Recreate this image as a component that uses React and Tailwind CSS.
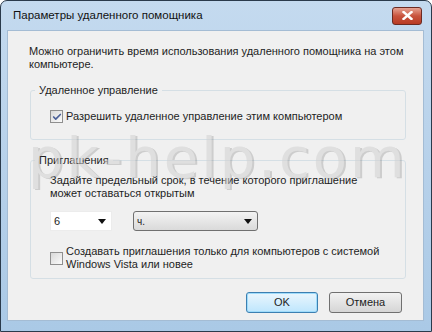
import { Check } from 'lucide-react';

const FONT = { fontFamily: '"Liberation Sans", Arial, sans-serif' };

function Checkbox({ checked }) {
    return (
        <div className="w-[13px] h-[13px] border border-[#8f8f8f] bg-gradient-to-br from-[#d8d8d8] to-[#fbfbfb] flex items-center justify-center shrink-0">
            {checked && <Check className="w-[10px] h-[10px] text-[#4a5f97]" strokeWidth={4} />}
        </div>
    );
}

function Arrow() {
    return (
        <svg width="8" height="5" viewBox="0 0 8 5">
            <path d="M0 0 H8 L4 5 Z" fill="#111" />
        </svg>
    );
}

export default function App() {
    return (
        <div
            className="w-[432px] h-[332px] rounded-t-[7px] border border-[#2a3a4b] bg-gradient-to-b from-[#c4daef] via-[#b7d1ea] to-[#aac9e6] flex flex-col text-[11px] text-[#1e1e1e] overflow-hidden"
            style={FONT}
        >
            {/* title bar */}
            <div className="h-[29px] flex items-center justify-between pl-[12px] pr-[9px]">
                <span className="text-[11.5px] text-[#111] mt-[1px]">Параметры удаленного помощника</span>
                <div className="w-[30px] h-[18px] rounded-[3px] border border-[#6b2a22] bg-gradient-to-b from-[#e5a293] via-[#c8533d] to-[#b83b24] flex items-center justify-center">
                    <svg width="11" height="9" viewBox="0 0 11 9">
                        <path d="M1.5 1 L9.5 8 M9.5 1 L1.5 8" stroke="#fff" strokeWidth="2.4" strokeLinecap="square" />
                    </svg>
                </div>
            </div>

            {/* client area */}
            <div className="relative flex-1 ml-[6px] mr-[7px] mb-[10px] bg-[#f0f0f0] border border-[#a4bcd4] pl-[21px] pt-[14px]">
                <p className="leading-[13px]">
                    Можно ограничить время использования удаленного помощника на этом
                    <br />
                    компьютере.
                </p>

                <fieldset className="mt-[13px] ml-[1px] w-[376px] border border-[#d5dfe5] rounded-[3px] p-0">
                    <legend className="ml-[4px] px-[4px] leading-[13px]">Удаленное управление</legend>
                    <div className="flex items-center gap-[3px] pl-[19px] mt-[13px] mb-[16px]">
                        <Checkbox checked />
                        <span className="leading-[13px]">Разрешить удаленное управление этим компьютером</span>
                    </div>
                </fieldset>

                <fieldset className="mt-[14px] ml-[1px] w-[376px] border border-[#d5dfe5] rounded-[3px] p-0">
                    <legend className="ml-[4px] px-[4px] leading-[13px]">Приглашения</legend>
                    <div className="pl-[19px] pb-[7px]">
                        <p className="leading-[13px] mt-[7px]">
                            Задайте предельный срок, в течение которого приглашение
                            <br />
                            может оставаться открытым
                        </p>
                        <div className="flex items-center gap-[21px] mt-[11px]">
                            <div className="w-[62px] h-[20px] bg-white border border-[#ececec] flex items-center justify-between pl-[3px] pr-[5px]">
                                <span>6</span>
                                <Arrow />
                            </div>
                            <div className="w-[125px] h-[20px] rounded-[3px] border border-[#707070] bg-gradient-to-b from-[#f3f3f3] to-[#dadada] flex items-center justify-between pl-[3px] pr-[5px]">
                                <span className="text-[10px]">ч.</span>
                                <Arrow />
                            </div>
                        </div>
                        <div className="flex items-center gap-[3px] mt-[14px]">
                            <Checkbox />
                            <span className="leading-[13px]">
                                Создавать приглашения только для компьютеров с системой
                                <br />
                                Windows Vista или новее
                            </span>
                        </div>
                    </div>
                </fieldset>

                <div className="flex justify-end gap-[11px] mt-[13px] pr-[21px]">
                    <button className="w-[72px] h-[21px] rounded-[3px] border border-[#3c7fb1] bg-gradient-to-b from-[#eaf6fd] to-[#bee6fd] shadow-[inset_0_0_0_1px_#9fdcfb]">
                        OK
                    </button>
                    <button className="w-[73px] h-[21px] rounded-[3px] border border-[#707070] bg-gradient-to-b from-[#f2f2f2] to-[#d5d5d5]">
                        Отмена
                    </button>
                </div>

                {/* watermark overlay */}
                <div
                    className="absolute left-[20px] top-[99px] text-[56px] leading-none tracking-[3px] whitespace-nowrap text-[#d2d2d2] opacity-55 pointer-events-none select-none"
                    style={{ fontFamily: '"DejaVu Sans", sans-serif', textShadow: '2px 1px 0 rgba(100,100,100,0.45)' }}
                >
                    pk-help.com
                </div>
            </div>
        </div>
    );
}
